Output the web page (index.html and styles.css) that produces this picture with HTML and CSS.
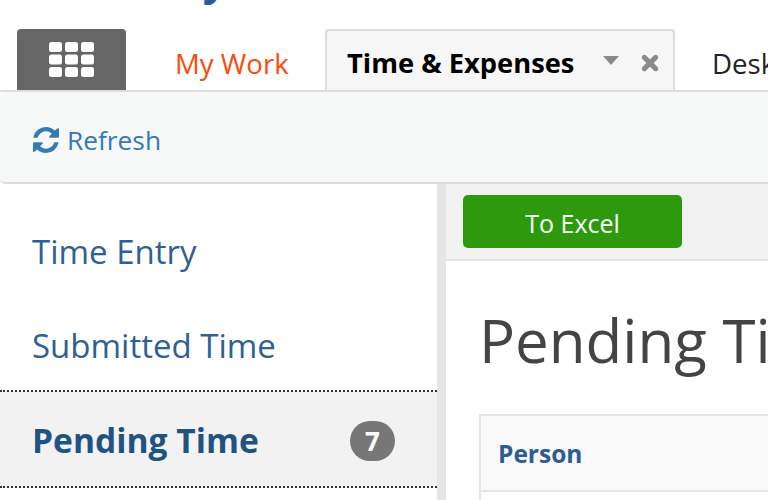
FILE: index.html
```html
<!DOCTYPE html>
<html lang="en">
<head>
  <meta charset="UTF-8">
  <title>Time &amp; Expenses</title>
  <link rel="stylesheet" href="styles.css">
</head>
<body>

  <div class="brand"><span class="brand-name">Unity</span></div>

  <nav class="tabs">
    <button class="apps-button" aria-label="Apps">
      <svg width="45" height="35" viewBox="0 0 45 35">
        <g fill="#fff">
          <rect x="0" y="0" width="13" height="10" rx="2.5"/>
          <rect x="16" y="0" width="13" height="10" rx="2.5"/>
          <rect x="32" y="0" width="13" height="10" rx="2.5"/>
          <rect x="0" y="12.5" width="13" height="10" rx="2.5"/>
          <rect x="16" y="12.5" width="13" height="10" rx="2.5"/>
          <rect x="32" y="12.5" width="13" height="10" rx="2.5"/>
          <rect x="0" y="25" width="13" height="10" rx="2.5"/>
          <rect x="16" y="25" width="13" height="10" rx="2.5"/>
          <rect x="32" y="25" width="13" height="10" rx="2.5"/>
        </g>
      </svg>
    </button>
    <a class="tab tab-home">My Work</a>
    <div class="tab tab-active">
      <span class="tab-title">Time &amp; Expenses</span>
      <svg class="tab-caret" width="16" height="9" viewBox="0 0 16 9"><path d="M0 0h16L8 9z" fill="#8a8a8a"/></svg>
      <svg class="tab-close" width="18" height="18" viewBox="0 0 16 16"><path d="M3 3l10 10M13 3L3 13" stroke="#8a8a8a" stroke-width="4.4" stroke-linecap="round"/></svg>
    </div>
    <a class="tab tab-other">Desktop</a>
  </nav>

  <div class="toolbar">
    <a class="refresh">
      <svg width="26" height="26" viewBox="0 0 1536 1536"><path fill="#337ab7" d="M1511 928q0 5-1 7-64 268-268 434.500t-478 166.500q-146 0-282.500-55t-243.500-157l-129 129q-19 19-45 19t-45-19-19-45v-448q0-26 19-45t45-19h448q26 0 45 19t19 45-19 45l-137 137q71 66 161 102t187 36q134 0 250-65t186-179q11-17 53-117 8-23 30-23h192q13 0 22.500 9.500t9.500 22.500zM1536 128v448q0 26-19 45t-45 19h-448q-26 0-45-19t-19-45 19-45l138-138q-148-137-349-137-134 0-250 65t-186 179q-11 17-53 117-8 23-30 23h-199q-13 0-22.500-9.500t-9.500-22.500v-7q65-268 270-434.500t480-166.500q146 0 284 55.500t245 156.500l130-129q19-19 45-19t45 19 19 45z"/></svg>
      <span>Refresh</span>
    </a>
  </div>

  <div class="layout">
    <aside class="sidebar">
      <a class="side-item">Time Entry</a>
      <a class="side-item">Submitted Time</a>
      <a class="side-item side-current">
        <span>Pending Time</span>
        <span class="count">7</span>
      </a>
    </aside>

    <main class="content">
      <div class="actions">
        <button class="btn-excel">To Excel</button>
      </div>
      <div class="content-body">
        <h1>Pending Time</h1>
        <table class="grid">
          <tr><th>Person</th></tr>
          <tr><td></td></tr>
        </table>
      </div>
    </main>
  </div>

</body>
</html>
```

FILE: styles.css
```css
html, body {
  height: 500px;
  overflow: hidden;
}

body {
  margin: 0;
  width: 768px;
  display: flex;
  flex-direction: column;
  background: #fff;
  font-family: 'Open Sans', sans-serif;
  color: #444;
}

a {
  text-decoration: none;
}

.brand {
  height: 29px;
  flex-shrink: 0;
  overflow: hidden;
  padding-left: 108px;
}

.brand-name {
  display: block;
  margin-top: -51px;
  font-size: 44px;
  line-height: 56px;
  font-weight: 700;
  color: #2b5d93;
}

/* tabs row */
.tabs {
  display: flex;
  align-items: flex-end;
  height: 63px;
  flex-shrink: 0;
  padding-left: 17px;
  box-sizing: border-box;
  border-bottom: 2px solid #ddd;
  white-space: nowrap;
  overflow: hidden;
}

.apps-button {
  width: 109px;
  height: 61px;
  padding: 0;
  border: none;
  border-radius: 4px 4px 0 0;
  background: #666;
  display: flex;
  align-items: center;
  justify-content: center;
  flex-shrink: 0;
}

.tab {
  font-size: 27.6px;
  flex-shrink: 0;
}

.tab-home {
  color: #fa4a0c;
  margin-left: 49px;
  width: 150px;
  height: 61px;
  line-height: 68px;
}

.tab-active {
  width: 350px;
  height: 61px;
  box-sizing: border-box;
  border: 2px solid #ddd;
  border-bottom: none;
  border-radius: 4px 4px 0 0;
  background: #f6f6f6;
  display: flex;
  align-items: center;
  padding: 0 14px 0 20px;
}

.tab-title {
  font-size: 27.3px;
  font-weight: 700;
  color: #000;
  flex: 1;
  padding-top: 4px;
}

.tab-caret {
  margin-right: 22px;
}

.tab-close {
  margin-top: 4px;
}

.tab-other {
  color: #222;
  margin-left: 37px;
  height: 61px;
  line-height: 68px;
}

.toolbar {
  height: 92px;
  flex-shrink: 0;
  box-sizing: border-box;
  background: #f7f8f8;
  border-bottom: 2px solid #ddd;
  border-radius: 5px 0 0 5px;
  padding: 6px 0 0 33px;
  display: flex;
  align-items: center;
}

.refresh {
  display: flex;
  align-items: center;
  gap: 8px;
  font-size: 26.3px;
  color: #337ab7;
}

.layout {
  display: flex;
  flex: 1;
  min-height: 0;
}

.sidebar {
  width: 437px;
  padding-top: 21px;
  flex-shrink: 0;
}

.side-item {
  display: flex;
  align-items: center;
  justify-content: space-between;
  height: 94px;
  box-sizing: border-box;
  padding: 0 42px 2px 32px;
  font-size: 33px;
  color: #2f6190;
}

.side-item + .side-item {
  height: 91px;
  padding: 1px 42px 0 32px;
}

.side-item.side-current {
  height: 98px;
  border-top: 2px dotted #333;
  border-bottom: 2px dotted #333;
  background: #f2f2f2;
  font-size: 33.6px;
  font-weight: 700;
  color: #1f5482;
}

.count {
  width: 45px;
  height: 40px;
  margin-top: 2px;
  border-radius: 20px;
  background: #777;
  color: #fff;
  font-size: 26px;
  line-height: 40px;
  text-align: center;
}

.content {
  flex: 1;
  min-width: 0;
  border-left: 9px solid #e5e5e5;
  overflow: hidden;
}

.actions {
  height: 77px;
  box-sizing: border-box;
  background: #f2f2f2;
  border-bottom: 2px solid #e5e5e5;
  padding: 11px 0 0 17px;
}

.btn-excel {
  width: 219px;
  height: 53px;
  border: none;
  border-radius: 5px;
  background: #2d9a0e;
  color: #fff;
  font-family: inherit;
  font-size: 25px;
  padding: 2px 0 0;
}

.content-body {
  padding-left: 33px;
}

h1 {
  margin: 0;
  padding-top: 35px;
  height: 153px;
  box-sizing: border-box;
  font-size: 60px;
  line-height: 88px;
  font-weight: 400;
  color: #444;
  white-space: nowrap;
}

.grid {
  border-collapse: collapse;
  width: 400px;
}

.grid th {
  height: 76px;
  box-sizing: border-box;
  padding: 0 0 0 17px;
  border: 2px solid #e5e5e5;
  background: #f9f9f9;
  text-align: left;
  font-size: 24.5px;
  color: #2b5d93;
}

.grid td {
  height: 40px;
  border: 2px solid #e5e5e5;
}
```
